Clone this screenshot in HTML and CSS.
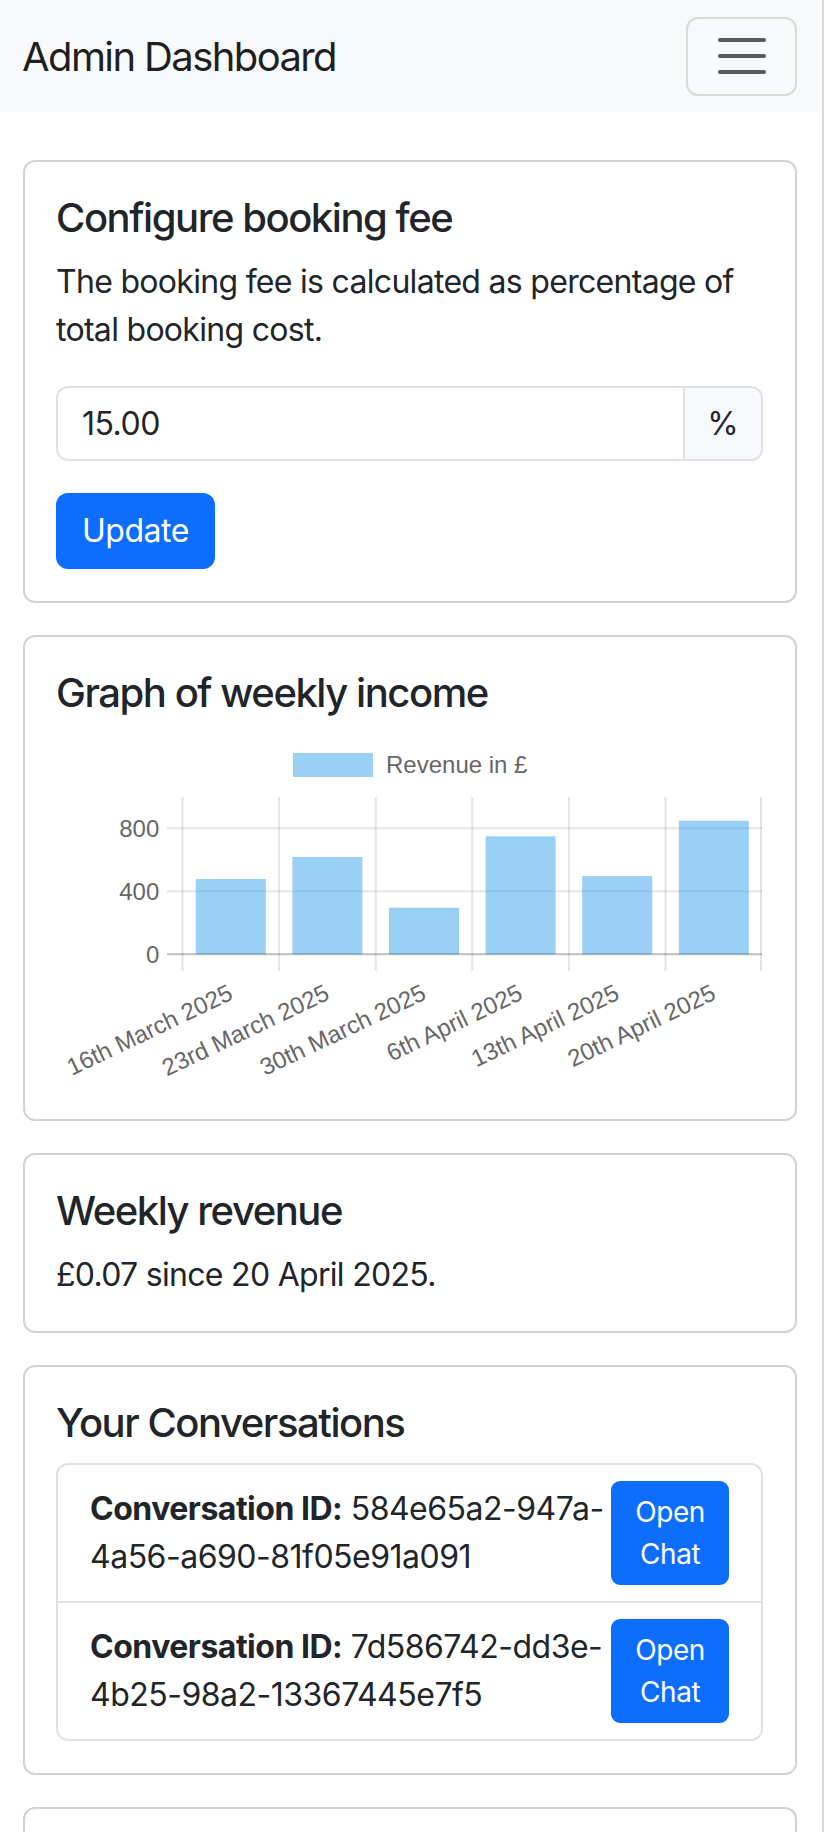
FILE: index.html
```html
<!DOCTYPE html>
<html lang="en">
<head>
    <meta charset="UTF-8">
    <meta name="viewport" content="width=device-width, initial-scale=1.0">
    <title>Admin Dashboard</title>
    <link rel="stylesheet" href="styles.css">
</head>
<body>
    <div class="page">
        <nav class="navbar">
            <a class="navbar-brand" href="#">Admin Dashboard</a>
            <button class="navbar-toggler" type="button" aria-label="Toggle navigation">
                <svg class="toggler-icon" width="60" height="60" viewBox="0 0 30 30">
                    <path d="M4 7h22M4 15h22M4 23h22" stroke="rgba(33,37,41,0.75)" stroke-width="2" stroke-linecap="round" fill="none"/>
                </svg>
            </button>
        </nav>

        <main class="container">
            <section class="card">
                <div class="card-body">
                    <h5 class="card-title">Configure booking fee</h5>
                    <p class="card-text">The booking fee is calculated as percentage of total booking cost.</p>
                    <form class="fee-form">
                        <div class="input-group">
                            <input class="form-control" type="text" value="15.00">
                            <span class="input-group-text">%</span>
                        </div>
                        <button class="btn btn-primary" type="button">Update</button>
                    </form>
                </div>
            </section>

            <section class="card">
                <div class="card-body">
                    <h5 class="card-title">Graph of weekly income</h5>
                    <svg class="chart" width="706" height="354" viewBox="0 0 706 354">
                        <!-- legend -->
                        <rect x="237" y="20" width="80" height="24" class="bar"/>
                        <text x="330" y="40" class="chart-text">Revenue in £</text>

                        <!-- grid -->
                        <g class="grid">
                            <line x1="111" y1="95.3" x2="706" y2="95.3"/>
                            <line x1="111" y1="158.3" x2="706" y2="158.3"/>
                            <line x1="126.5" y1="64.3" x2="126.5" y2="237.7"/>
                            <line x1="223.1" y1="64.3" x2="223.1" y2="237.7"/>
                            <line x1="319.7" y1="64.3" x2="319.7" y2="237.7"/>
                            <line x1="416.3" y1="64.3" x2="416.3" y2="237.7"/>
                            <line x1="512.9" y1="64.3" x2="512.9" y2="237.7"/>
                            <line x1="609.5" y1="64.3" x2="609.5" y2="237.7"/>
                            <line x1="705" y1="64.3" x2="705" y2="237.7"/>
                        </g>

                        <!-- y axis -->
                        <g class="chart-text" text-anchor="end">
                            <text x="103.3" y="103.9">800</text>
                            <text x="103.3" y="166.9">400</text>
                            <text x="103.3" y="229.9">0</text>
                        </g>

                        <!-- bars -->
                        <rect class="bar" x="139.8" y="146" width="70" height="75.3"/>
                        <rect class="bar" x="236.4" y="124" width="70" height="97.3"/>
                        <rect class="bar" x="333" y="174.7" width="70" height="46.6"/>
                        <rect class="bar" x="429.6" y="103.3" width="70" height="118"/>
                        <rect class="bar" x="526.2" y="143" width="70" height="78.3"/>
                        <rect class="bar" x="622.8" y="87.7" width="70" height="133.6"/>

                        <line class="axis" x1="111" y1="221.3" x2="706" y2="221.3"/>

                        <!-- x labels -->
                        <g class="chart-text" text-anchor="end">
                            <text transform="translate(178.3 265.5) rotate(-25.5)">16th March 2025</text>
                            <text transform="translate(274.9 265.5) rotate(-25.5)">23rd March 2025</text>
                            <text transform="translate(371.5 265.5) rotate(-25.5)">30th March 2025</text>
                            <text transform="translate(468.1 265.5) rotate(-25.5)">6th April 2025</text>
                            <text transform="translate(564.7 265.5) rotate(-25.5)">13th April 2025</text>
                            <text transform="translate(661.3 265.5) rotate(-25.5)">20th April 2025</text>
                        </g>
                    </svg>
                </div>
            </section>

            <section class="card">
                <div class="card-body">
                    <h5 class="card-title">Weekly revenue</h5>
                    <p class="card-text last">£0.07 since 20 April 2025.</p>
                </div>
            </section>

            <section class="card">
                <div class="card-body">
                    <h5 class="card-title">Your Conversations</h5>
                    <ul class="list-group">
                        <li class="list-group-item">
                            <span class="conv-id"><strong>Conversation ID:</strong> 584e65a2-947a-<wbr>4a56-a690-81f05e91a091</span>
                            <a class="btn btn-primary btn-sm" href="#">Open Chat</a>
                        </li>
                        <li class="list-group-item">
                            <span class="conv-id"><strong>Conversation ID:</strong> 7d586742-dd3e-<wbr>4b25-98a2-13367445e7f5</span>
                            <a class="btn btn-primary btn-sm" href="#">Open Chat</a>
                        </li>
                    </ul>
                </div>
            </section>

            <section class="card">
                <div class="card-body empty"></div>
            </section>
        </main>
    </div>
</body>
</html>
```

FILE: styles.css
```css
body {
    margin: 0;
    font-family: Inter, "Noto Sans", sans-serif;
    color: #212529;
    background-color: #fff;
}

.page {
    border-right: 2px solid #d8d8d8;
}

/* navbar */
.navbar {
    height: 112px;
    box-sizing: border-box;
    padding: 0 25px 0 22px;
    display: flex;
    align-items: center;
    justify-content: space-between;
    background-color: #f8f9fa;
}

.navbar-brand {
    font-size: 40px;
    letter-spacing: -1.6px;
    color: rgba(0, 0, 0, 0.9);
    text-decoration: none;
}

.navbar-toggler {
    width: 111px;
    height: 79px;
    padding: 0;
    display: flex;
    align-items: center;
    justify-content: center;
    background: transparent;
    border: 2px solid rgba(33, 37, 41, 0.15);
    border-radius: 12px;
}

.toggler-icon {
    display: block;
}

/* cards */
.container {
    padding: 48px 25px 0 23px;
}

.card {
    border: 2px solid #d3d3d3;
    border-radius: 12px;
    margin-bottom: 32px;
}

.card-body {
    padding: 32px 32px 32px 31px;
}

.card-body.empty {
    height: 120px;
}

.card-title {
    margin: 0 0 16px;
    font-size: 40px;
    font-weight: 500;
    line-height: 48px;
    letter-spacing: -1.45px;
}

.card-text {
    margin: 0 0 32px;
    font-size: 32px;
    line-height: 48px;
    letter-spacing: -0.7px;
}

.card-text.last {
    margin-bottom: 0;
}

/* form */
.input-group {
    display: flex;
    margin-bottom: 32px;
}

.form-control {
    flex: 1;
    min-width: 0;
    height: 75px;
    box-sizing: border-box;
    padding: 12px 24px;
    font-family: inherit;
    font-size: 32px;
    letter-spacing: -0.5px;
    color: #212529;
    border: 2px solid #dee2e6;
    border-radius: 12px 0 0 12px;
    outline: none;
}

.input-group-text {
    width: 80px;
    box-sizing: border-box;
    margin-left: -2px;
    display: flex;
    align-items: center;
    justify-content: center;
    font-size: 32px;
    background-color: #f8f9fa;
    border: 2px solid #dee2e6;
    border-radius: 0 12px 12px 0;
}

.btn {
    display: inline-block;
    font-family: inherit;
    font-size: 32px;
    line-height: 48px;
    letter-spacing: -0.5px;
    padding: 12px 24px;
    border: 2px solid transparent;
    border-radius: 12px;
    text-decoration: none;
    cursor: pointer;
}

.btn-primary {
    color: #fff;
    background-color: #0d6efd;
    border-color: #0d6efd;
}

.btn-sm {
    flex: 0 0 auto;
    width: min-content;
    font-size: 28px;
    line-height: 42px;
    letter-spacing: -0.4px;
    padding: 8px 22px;
    border-radius: 9px;
    text-align: center;
}

/* chart */
.chart {
    display: block;
    overflow: visible;
}

.chart-text {
    font-family: "Liberation Sans", Arial, sans-serif;
    font-size: 24px;
    fill: #666;
}

.grid line {
    stroke: rgba(0, 0, 0, 0.1);
    stroke-width: 2;
}

.axis {
    stroke: rgba(0, 0, 0, 0.25);
    stroke-width: 2;
}

.bar {
    fill: rgba(54, 162, 235, 0.5);
}

/* conversations */
.list-group {
    list-style: none;
    margin: 0;
    padding: 0;
    border: 2px solid #dee2e6;
    border-radius: 12px;
}

.list-group-item {
    display: flex;
    justify-content: space-between;
    align-items: center;
    padding: 16px 32px;
    font-size: 32px;
    line-height: 48px;
    letter-spacing: -0.5px;
}

.list-group-item + .list-group-item {
    border-top: 2px solid #dee2e6;
}

.conv-id strong {
    font-weight: 700;
}
```
